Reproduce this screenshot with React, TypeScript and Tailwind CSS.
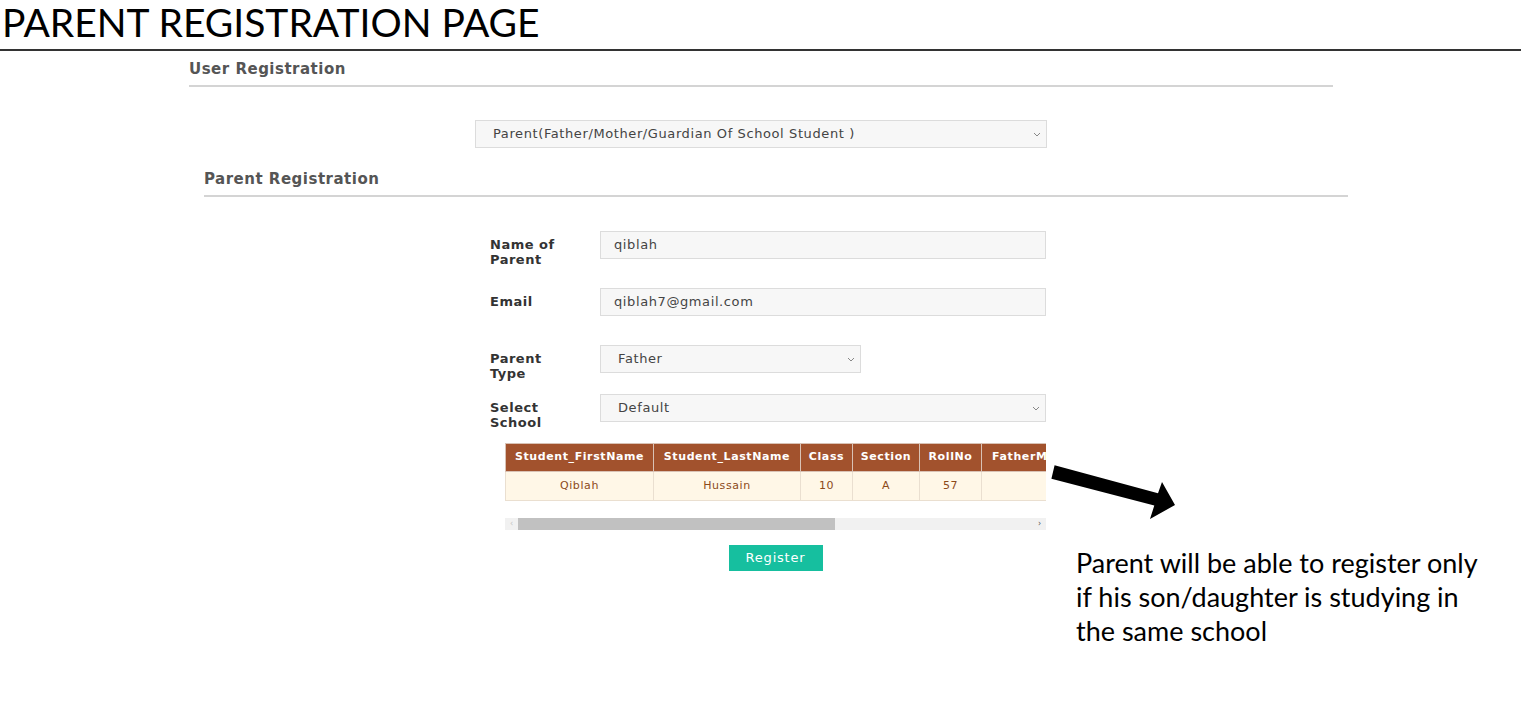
import React from 'react';

const Chevron = () => (
  <svg width="8" height="5" viewBox="0 0 8 5" className="shrink-0">
    <path d="M1 1 L4 4 L7 1" fill="none" stroke="#888" strokeWidth="1" />
  </svg>
);

function SelectBox({ value, className }: { value: string; className: string }) {
  return (
    <div className={`h-[28px] flex items-center justify-between bg-[#f7f7f7] border border-[#dcdcdc] pl-[17px] pr-[5px] text-[13px] tracking-[0.6px] text-[#444] ${className}`}>
      <span>{value}</span>
      <Chevron />
    </div>
  );
}

function TextBox({ value }: { value: string }) {
  return (
    <div className="w-[446px] h-[28px] flex items-center bg-[#f7f7f7] border border-[#dcdcdc] pl-[13px] text-[13px] tracking-[0.6px] text-[#444]">
      {value}
    </div>
  );
}

function Row({ label, children, className }: { label: React.ReactNode; children: React.ReactNode; className: string }) {
  return (
    <div className={`flex items-start ${className}`}>
      <div className="w-[110px] pt-[6px] pr-[30px] text-[13px] leading-[15px] tracking-[0.5px] font-bold text-[#333]">{label}</div>
      {children}
    </div>
  );
}

const headers = ['Student_FirstName', 'Student_LastName', 'Class', 'Section', 'RollNo', 'FatherMobile', 'MotherMobile'];
const widths = ['w-[148px]', 'w-[147px]', 'w-[52px]', 'w-[67px]', 'w-[62px]', 'w-[110px]', 'w-[110px]'];
const cells = ['Qiblah', 'Hussain', '10', 'A', '57', '', ''];

export default function App() {
  return (
    <div className="relative w-[1521px] h-[722px] bg-white overflow-hidden font-['DejaVu_Sans',Verdana,sans-serif]">
      {/* page title */}
      <h1 className="h-[49px] pl-[2px] font-['Lato',sans-serif] text-[39px] leading-[44px] text-black">PARENT REGISTRATION PAGE</h1>
      <div className="h-[2px] bg-[#333]" />

      <div className="pl-[189px]">
        <div className="w-[1144px] mt-[9px] pb-[7px] border-b-2 border-[#d4d4d4] text-[15px] leading-[18px] tracking-[0.5px] font-bold text-[#555]">
          User Registration
        </div>

        <SelectBox value="Parent(Father/Mother/Guardian Of School Student )" className="ml-[286px] mt-[33px] w-[572px]" />

        <div className="ml-[15px]">
          <div className="w-[1144px] mt-[22px] pb-[7px] border-b-2 border-[#d4d4d4] text-[15px] leading-[18px] tracking-[0.5px] font-bold text-[#555]">
            Parent Registration
          </div>

          <div className="ml-[286px]">
            <Row label="Name of Parent" className="mt-[34px]">
              <TextBox value="qiblah" />
            </Row>
            <Row label="Email" className="mt-[21px]">
              <TextBox value="qiblah7@gmail.com" />
            </Row>
            <Row label="Parent Type" className="mt-[29px]">
              <SelectBox value="Father" className="w-[261px]" />
            </Row>
            <Row label="Select School" className="mt-[13px]">
              <SelectBox value="Default" className="w-[446px]" />
            </Row>

            <div className="ml-[15px] w-[541px] mt-[13px]">
              <div className="overflow-hidden">
                <table className="table-fixed w-[696px] border-collapse text-[11px] tracking-[0.6px] whitespace-nowrap">
                  <thead>
                    <tr className="bg-[#a2522d] text-white">
                      {headers.map((h, i) => (
                        <th key={h} className={`${widths[i]} h-[28px] px-[6px] border border-[#d9c2b5] font-bold text-center overflow-hidden`}>{h}</th>
                      ))}
                    </tr>
                  </thead>
                  <tbody>
                    <tr className="bg-[#fff7e7] text-[#8c4a1a]">
                      {cells.map((c, i) => (
                        <td key={i} className="h-[29px] border border-[#eadfd0] text-center">{c}</td>
                      ))}
                    </tr>
                  </tbody>
                </table>
              </div>

              {/* horizontal scrollbar */}
              <div className="mt-[17px] h-[12px] bg-[#f1f1f1] flex items-center">
                <span className="w-[13px] text-center text-[8px] leading-[12px] text-[#c4c4c4]">‹</span>
                <div className="w-[317px] h-[12px] bg-[#c1c1c1]" />
                <div className="flex-1" />
                <span className="w-[13px] text-center text-[8px] leading-[12px] text-[#555]">›</span>
              </div>

              <div className="flex justify-center mt-[15px]">
                <button className="w-[94px] h-[26px] bg-[#16bf9f] text-white text-[13px] tracking-[0.8px]">Register</button>
              </div>
            </div>
          </div>
        </div>
      </div>

      {/* annotation */}
      <svg className="absolute left-[1040px] top-[450px]" width="150" height="80" viewBox="0 0 150 80">
        <polygon points="14.6,15.2 118,43.2 122,32 135,55 110,69 114.3,55.6 11.4,28.8" fill="#000" />
      </svg>
      <p className="absolute left-[1076px] top-[546px] w-[412px] font-['Lato',sans-serif] text-[27px] leading-[34px] text-black">
        Parent will be able to register only if his son/daughter is studying in the same school
      </p>
    </div>
  );
}
